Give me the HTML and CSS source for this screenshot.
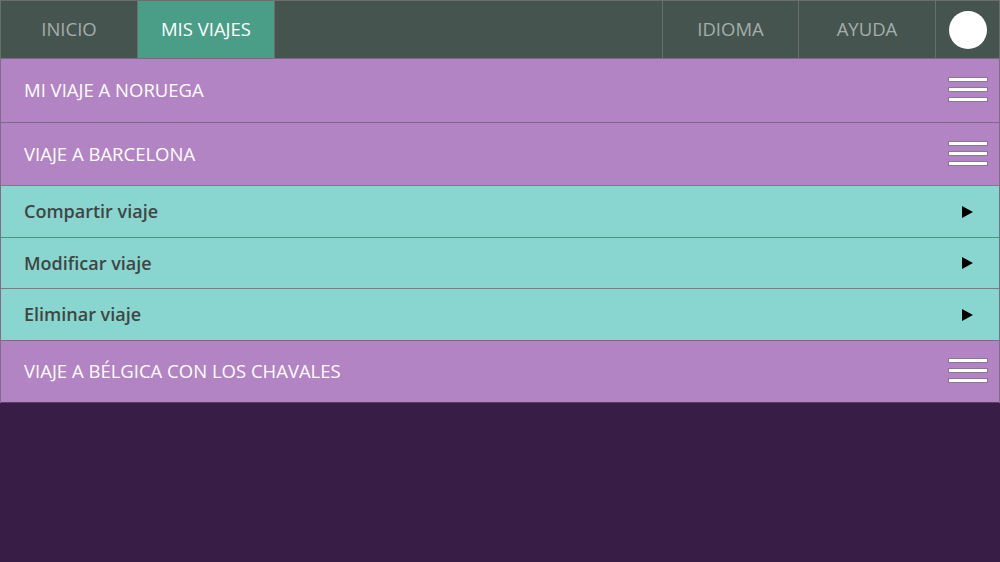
FILE: index.html
```html
<!DOCTYPE html>
<html lang="es">
<head>
<meta charset="utf-8">
<title>Mis viajes</title>
<link rel="stylesheet" href="styles.css">
</head>
<body>
<nav class="nav">
  <a class="nav-item">INICIO</a>
  <a class="nav-item active">MIS VIAJES</a>
  <div class="nav-spacer"></div>
  <a class="nav-item sep">IDIOMA</a>
  <a class="nav-item">AYUDA</a>
  <div class="nav-avatar"><span class="avatar"></span></div>
</nav>
<main class="list">
  <div class="trip">
    <span class="trip-title">MI VIAJE A NORUEGA</span>
    <span class="burger"><i></i><i></i><i></i></span>
  </div>
  <div class="trip">
    <span class="trip-title">VIAJE A BARCELONA</span>
    <span class="burger"><i></i><i></i><i></i></span>
  </div>
  <div class="action">
    <span class="action-title">Compartir viaje</span>
    <span class="arrow"></span>
  </div>
  <div class="action">
    <span class="action-title">Modificar viaje</span>
    <span class="arrow"></span>
  </div>
  <div class="action">
    <span class="action-title">Eliminar viaje</span>
    <span class="arrow"></span>
  </div>
  <div class="trip">
    <span class="trip-title">VIAJE A BÉLGICA CON LOS CHAVALES</span>
    <span class="burger"><i></i><i></i><i></i></span>
  </div>
</main>
</body>
</html>
```

FILE: styles.css
```css
* { box-sizing: border-box; }
html, body { margin: 0; padding: 0; }
body {
  width: 1000px;
  height: 562px;
  background: #381e47;
  font-family: "Open Sans", "Noto Sans", sans-serif;
  overflow: hidden;
}
.nav {
  display: flex;
  height: 58px;
  background: #465450;
  border-top: 1px solid #6a6f6d;
  border-left: 1px solid #6a6f6d;
  border-right: 1px solid #6a6f6d;
}
.nav-item {
  width: 137px;
  display: flex;
  align-items: center;
  justify-content: center;
  color: #a3aeaa;
  font-size: 18.5px;
  border-right: 1px solid #6a6f6d;
  padding-bottom: 2px;
}
.nav-item.active {
  background: #4a9e88;
  color: #ffffff;
}
.nav-item.sep { border-left: 1px solid #6a6f6d; }
.nav-spacer { flex: 1; }
.nav-avatar {
  width: 63px;
  display: flex;
  align-items: center;
  justify-content: center;
}
.avatar {
  width: 38px;
  height: 38px;
  border-radius: 50%;
  background: #ffffff;
}
.list {
  border-left: 1px solid #7d6d86;
  border-right: 1px solid #7d6d86;
}
.trip {
  display: flex;
  align-items: center;
  justify-content: space-between;
  height: 63px;
  background: #b384c4;
  border-top: 1px solid #7b6a84;
  padding: 0 11px 0 23px;
}
.trip:first-child { height: 64px; }
.trip-title {
  color: #ffffff;
  font-size: 18.5px;
  padding-bottom: 2px;
}
.burger {
  display: flex;
  flex-direction: column;
  gap: 5px;
  width: 40px;
  margin-top: -2px;
}
.burger i {
  display: block;
  height: 5px;
  background: #ffffff;
  border: 1px solid #8a7890;
}
.action {
  display: flex;
  align-items: center;
  justify-content: space-between;
  height: 52px;
  background: #89d5d0;
  border-top: 1px solid #73807f;
  padding: 0 26px 0 23px;
}
.action:nth-child(4) { height: 51px; }
.action-title {
  color: #3e4644;
  font-size: 18px;
  font-weight: 600;
  padding-bottom: 1px;
}
.arrow {
  width: 0;
  height: 0;
  border-top: 6.5px solid transparent;
  border-bottom: 6.5px solid transparent;
  border-left: 11px solid #000000;
}
.list > .trip:last-child { border-bottom: 1px solid #5a3e66; }
```
